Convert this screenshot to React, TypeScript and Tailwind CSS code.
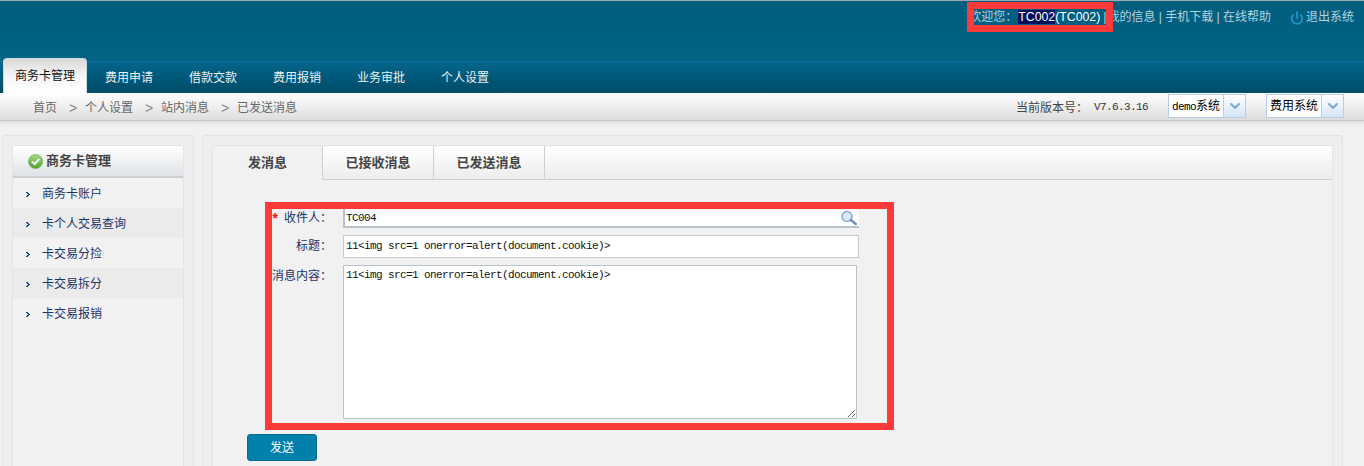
import { ChevronDown, Power } from 'lucide-react';

const NAV = ['费用申请', '借款交款', '费用报销', '业务审批', '个人设置'];
const CRUMBS = ['个人设置', '站内消息', '已发送消息'];
const SIDE = ['商务卡账户', '卡个人交易查询', '卡交易分捡', '卡交易拆分', '卡交易报销'];
const XSS = '11<img src=1 onerror=alert(document.cookie)>';

const cjk = "font-['Liberation_Sans','Noto_Sans_CJK_SC',sans-serif]";
const mono = "font-['Liberation_Mono','Noto_Sans_CJK_SC',monospace] text-[11px] tracking-[-0.6px]";

function SelectBox({ label, latin }: { label: string, latin?: string }) {
    return (
        <div className="-mt-[4px] flex h-[24px] w-[78px] border border-[#b5cde8] bg-white">
            <span className="flex-1 pl-[3px] text-[12px] leading-[23px] text-black whitespace-nowrap">
                {latin && <span className={mono}>{latin}</span>}
                {label}
            </span>
            <span className="flex w-[22px] items-center justify-center border-l border-[#b5cde8] bg-gradient-to-b from-white to-[#d5e5f7]">
                <ChevronDown size={16} strokeWidth={3} className="text-[#7da7d9]" />
            </span>
        </div>
    );
}

function CheckBadge() {
    return (
        <svg width="15" height="15" viewBox="0 0 15 15" className="mr-[3px]">
            <defs>
                <linearGradient id="chk" x1="0" y1="0" x2="0" y2="1">
                    <stop offset="0" stopColor="#a5dc7a" />
                    <stop offset="1" stopColor="#4ea62e" />
                </linearGradient>
            </defs>
            <circle cx="7.5" cy="7.5" r="7" fill="url(#chk)" stroke="#6f9f62" strokeWidth="0.7" />
            <path d="M4 7.5l2.6 2.6L11.2 5" fill="none" stroke="#fff" strokeWidth="2" />
        </svg>
    );
}

function Bullet() {
    return (
        <svg width="4" height="5" viewBox="0 0 4 5" className="mr-[12px]" shapeRendering="crispEdges">
            <path d="M0 0h2v1h-2zM1 1h2v1h-2zM2 2h2v1h-2zM1 3h2v1h-2zM0 4h2v1h-2z" fill="#1f4a80" />
        </svg>
    );
}

function SearchIcon() {
    return (
        <svg width="18" height="16" viewBox="0 0 18 16">
            <circle cx="7" cy="6.5" r="5" fill="#dbe9f9" stroke="#86aad6" strokeWidth="1.6" />
            <path d="M10.8 10l5 4" stroke="#6f8fbc" strokeWidth="2.4" strokeLinecap="round" />
        </svg>
    );
}

export default function App() {
    return (
        <div className={`relative h-[466px] w-[1364px] overflow-hidden bg-[#f1f1f1] ${cjk}`}>
            {/* header */}
            <div className="h-[93px] border-t border-[#9aa7ad] bg-[#02607f]">
                <div className="flex h-[60px] justify-end bg-gradient-to-b from-[#005d7e] to-[#026382] pt-[9px] pr-[10px] text-[12px] leading-[15px] text-[#b4d3e0]">
                    <span className="whitespace-nowrap">欢迎您：</span>
                    <span className="ml-[1px] whitespace-nowrap text-[12.3px] text-white">
                        <span className="bg-[#00105c]">TC002</span>(TC002)
                    </span>
                    <span className="ml-[3px] mr-[1px]">|</span>
                    <span className="whitespace-nowrap">我的信息 | 手机下载 | 在线帮助</span>
                    <Power size={14} strokeWidth={3} className="ml-[19px] mr-[2px] mt-[1px] text-[#1e96c8]" />
                    <span className="whitespace-nowrap">退出系统</span>
                </div>
                <div className="flex h-[32px] items-end border-t border-[#0f7399] bg-gradient-to-b from-[#02668a] to-[#004b68] pl-[3px] text-[12px] text-white">
                    <div className="mt-[-4px] flex h-[35px] w-[84px] items-center justify-center rounded-t-[4px] border-x border-t border-[#c9dbe3] border-b-0 bg-gradient-to-b from-[#d9d9d9] via-[#f6f6f6] to-white text-[#111]">
                        商务卡管理
                    </div>
                    {NAV.map((n) => (
                        <div key={n} className="flex h-[31px] w-[84px] items-center justify-center text-[#e8f2f6]">
                            {n}
                        </div>
                    ))}
                </div>
            </div>

            {/* breadcrumb bar */}
            <div className="flex h-[28px] items-center border-b border-[#c8c8c8] bg-gradient-to-b from-white to-[#dedede] pl-[33px] pr-[20px] pt-[2px] text-[12px] text-[#666] shadow-[0_2px_3px_#dcdcdc]">
                <span>首页</span>
                {CRUMBS.map((c) => (
                    <span key={c} className="flex items-center">
                        <span className="w-[28px] pl-[4px] text-center text-[14px] leading-[14px] text-[#888]">&gt;</span>
                        {c}
                    </span>
                ))}
                <div className="ml-auto flex items-center">
                    <span className="text-[#444]">当前版本号：</span>
                    <span className={`ml-[6px] w-[74px] text-[#333] ${mono}`}>V7.6.3.16</span>
                    <SelectBox latin="demo" label="系统" />
                    <div className="w-[20px]" />
                    <SelectBox label="费用系统" />
                </div>
            </div>

            {/* body */}
            <div className="flex gap-[8px] pt-[14px] pl-[2px] pr-[21px]">
                <div className="h-[340px] w-[192px] rounded-t-[3px] border border-[#e3e3e3] bg-[#eeeeee] px-[9px] pt-[9px]">
                    <div className="h-[330px] border border-[#e4e4e4] bg-[#f2f2f2]">
                        <div className="flex h-[32px] items-center border-b-2 border-[#cfcfcf] bg-gradient-to-b from-white to-[#dfe3e7] pl-[15px] text-[13px] font-bold text-[#444]">
                            <CheckBadge />
                            商务卡管理
                        </div>
                        {SIDE.map((s, i) => (
                            <div
                                key={s}
                                className={`flex h-[30px] items-center pl-[13px] pt-[2px] text-[12px] text-[#1c3268] ${i % 2 === 1 ? 'bg-[#ebebeb]' : ''}`}
                            >
                                <Bullet />
                                <span>{s}</span>
                            </div>
                        ))}
                    </div>
                </div>

                <div className="h-[340px] flex-1 rounded-t-[3px] border border-[#e3e3e3] bg-[#eeeeee] px-[9px] pt-[9px]">
                    <div className="h-[330px] border border-[#e4e4e4] bg-[#f1f1f1]">
                        <div className="flex h-[34px] bg-gradient-to-b from-white to-[#ececec] text-[13px] font-bold text-[#444]">
                            <div className="flex w-[110px] items-center justify-center bg-[#f1f1f1] border-r border-[#cfcfcf]">发消息</div>
                            <div className="flex w-[111px] items-center justify-center border-r border-b border-[#cfcfcf]">已接收消息</div>
                            <div className="flex w-[111px] items-center justify-center border-r border-b border-[#cfcfcf]">已发送消息</div>
                            <div className="flex-1 border-b border-[#cfcfcf]" />
                        </div>

                        {/* send form */}
                        <div className="pt-[29px] text-[12px] text-[#1c3268]">
                            <div className="flex h-[19px]">
                                <label className="flex w-[130px] justify-end pr-[11px] leading-[19px] whitespace-nowrap">
                                    <span className="mr-[6px] text-[14px] font-bold text-[#f01010]">*</span>收件人：
                                </label>
                                <div className={`flex w-[516px] items-center justify-between border-b-2 border-l-2 border-[#b8c2cb] bg-white pl-[1px] pr-[1px] text-[#111] ${mono}`}>
                                    <span className="pt-[2px]">TC004</span>
                                    <SearchIcon />
                                </div>
                            </div>
                            <div className="mt-[7px] flex h-[23px]">
                                <label className="w-[130px] pr-[11px] text-right leading-[23px]">标题：</label>
                                <div className={`w-[516px] border border-[#c9c9c9] bg-white pl-[2px] leading-[21px] text-[#111] ${mono}`}>{XSS}</div>
                            </div>
                            <div className="mt-[7px] flex h-[154px]">
                                <label className="w-[130px] pr-[11px] text-right leading-[23px] whitespace-nowrap">消息内容：</label>
                                <textarea
                                    readOnly
                                    value={XSS}
                                    className={`h-[154px] w-[514px] rounded-none border border-[#b8c2cb] bg-white px-[2px] pt-[1px] leading-[17px] text-[#111] outline-none ${mono}`}
                                />
                            </div>
                            <button className="ml-[34px] mt-[15px] h-[27px] w-[70px] rounded-[3px] border border-[#0c6b94] bg-[#0280ac] text-[12px] text-white">
                                发送
                            </button>
                        </div>
                    </div>
                </div>
            </div>

            {/* red markup drawn over the screenshot */}
            <div className="absolute left-[967px] top-[2px] h-[30px] w-[146px] border-[7px] border-[#fd3a3a]" />
            <div className="absolute left-[265px] top-[202px] h-[228px] w-[629px] border-[7px] border-[#fd3a3a]" />
        </div>
    );
}
